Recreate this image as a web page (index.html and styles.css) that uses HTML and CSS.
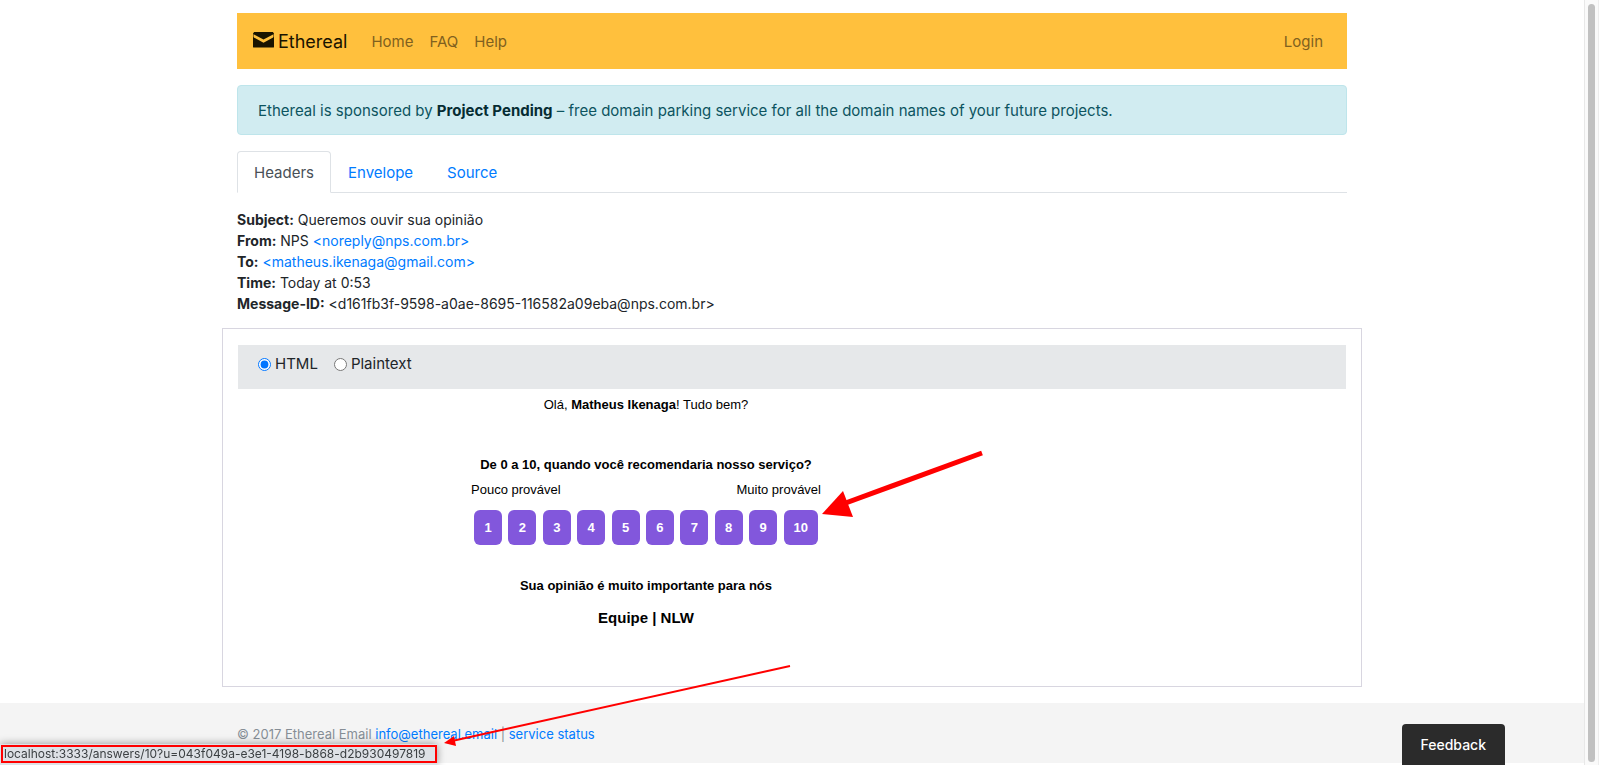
FILE: index.html
```html
<!DOCTYPE html>
<html lang="en">
<head>
<meta charset="utf-8">
<title>Ethereal Email</title>
<link rel="stylesheet" href="styles.css">
</head>
<body>
<div class="container">
  <nav class="navbar">
    <a class="brand" href="#">
      <svg class="brand-icon" width="21" height="16" viewBox="0 0 21 16" aria-hidden="true">
        <path fill="#1a1400" d="M0 5 10.500 10.700 21 5V15H0z"/>
        <path fill="#1a1400" d="M1 0H20L21 2 10.500 7.500 0 2z"/>
        <path fill="none" stroke="#1a1400" stroke-opacity=".5" stroke-width="1" d="M.5 1V15.500H20.500V1"/>
      </svg>
      Ethereal</a>
    <a class="nav-link" href="#">Home</a>
    <a class="nav-link" href="#">FAQ</a>
    <a class="nav-link" href="#">Help</a>
    <a class="nav-link login" href="#">Login</a>
  </nav>

  <div class="alert">Ethereal is sponsored by <a class="alert-link" href="#">Project Pending</a> – free domain parking service for all the domain names of your future projects.</div>

  <div class="tabs">
    <a class="tab active" href="#">Headers</a>
    <a class="tab" href="#">Envelope</a>
    <a class="tab" href="#">Source</a>
  </div>

  <div class="headers">
    <div><strong>Subject:</strong> Queremos ouvir sua opinião</div>
    <div><strong>From:</strong> NPS <a href="#">&lt;noreply@nps.com.br&gt;</a></div>
    <div><strong>To:</strong> <a href="#">&lt;matheus.ikenaga@gmail.com&gt;</a></div>
    <div><strong>Time:</strong> Today at 0:53</div>
    <div><strong>Message-ID:</strong> &lt;d161fb3f-9598-a0ae-8695-116582a09eba@nps.com.br&gt;</div>
  </div>

  <main class="message">
    <div class="format">
      <label class="choice"><input type="radio" name="format" checked>HTML</label>
      <label class="choice"><input type="radio" name="format">Plaintext</label>
    </div>
    <div class="mail">
      <p class="greeting">Olá, <strong>Matheus Ikenaga</strong>! Tudo bem?</p>
      <p class="question">De 0 a 10, quando você recomendaria nosso serviço?</p>
      <div class="survey">
        <div class="scale"><span>Pouco provável</span><span>Muito provável</span></div>
        <div class="scores">
          <a class="score" href="#">1</a>
          <a class="score" href="#">2</a>
          <a class="score" href="#">3</a>
          <a class="score" href="#">4</a>
          <a class="score" href="#">5</a>
          <a class="score" href="#">6</a>
          <a class="score" href="#">7</a>
          <a class="score" href="#">8</a>
          <a class="score" href="#">9</a>
          <a class="score" href="#">10</a>
        </div>
      </div>
      <p class="thanks">Sua opinião é muito importante para nós</p>
      <h3 class="team">Equipe | NLW</h3>
    </div>
  </main>
</div>

<footer class="footer">
  <div class="footer-inner">© 2017 Ethereal Email <a href="#">info@ethereal.email</a> | <a href="#">service status</a></div>
</footer>

<button class="feedback" type="button">Feedback</button>
<div class="status"><div class="status-text">localhost:3333/answers/10?u=043f049a-e3e1-4198-b868-d2b930497819</div></div>
<div class="scrollbar"><div class="thumb"></div></div>

<svg class="arrows" width="1000" height="765" viewBox="0 0 1000 765" aria-hidden="true">
  <g fill="#f00" stroke="#f00">
    <path stroke-width="5" d="M982 453 832 508"/>
    <path stroke="none" d="M822 514 843 491 853 517z"/>
    <path stroke-width="2" d="M790 666 452 741"/>
    <path stroke="none" d="M444 743 454 736 456 746z"/>
  </g>
</svg>
</body>
</html>
```
FILE: styles.css
```css
* { box-sizing: border-box; }

body {
  margin: 0;
  padding-right: 15px;
  background: #fff;
  color: #212529;
  font: 15px/24px Inter, "Liberation Sans", sans-serif;
  overflow: hidden;
}

a { color: #007bff; text-decoration: none; }
p { margin: 0; }

.container, .footer-inner {
  max-width: 1140px;
  margin: 0 auto;
  padding: 0 15px;
}
.container { padding-top: 13px; }

.navbar {
  display: flex;
  align-items: center;
  min-height: 56px;
  margin-bottom: 16px;
  padding: 0 16px;
  background: #ffc03d;
}
.brand {
  display: flex;
  align-items: center;
  gap: 4px;
  margin-right: 16px;
  padding-top: 2px;
  color: #1a1400;
  font-size: 18px;
}
.brand-icon { margin-bottom: 4px; }
.nav-link { padding: 9px 8px 7px; color: #80601f; }
.login { margin-left: auto; }

.alert {
  margin-bottom: 16px;
  padding: 13px 20px 11px;
  border: 1px solid #bee5eb;
  border-radius: 4px;
  background: #d1ecf1;
  color: #0c5460;
}
.alert-link { color: #062c33; font-weight: 700; }

.tabs {
  display: flex;
  border-bottom: 1px solid #dee2e6;
  margin-bottom: 16px;
}
.tab {
  padding: 9px 16px 7px;
  border: 1px solid transparent;
  border-radius: 4px 4px 0 0;
  margin-bottom: -1px;
}
.tab.active {
  border-color: #dee2e6 #dee2e6 #fff;
  background: #fff;
  color: #495057;
}

.headers {
  margin-bottom: 14px;
  font-size: 14px;
  line-height: 21px;
}

.message {
  min-height: 359px;
  margin: 0 -15px 16px;
  padding: 16px 15px;
  border: 1px solid #d8d6e0;
}
.format {
  display: flex;
  align-items: flex-start;
  gap: 16px;
  height: 44px;
  padding: 7px 20px;
  background: #e6e8ea;
}
.choice { display: flex; align-items: center; gap: 4px; }
.choice input { width: 13px; height: 13px; margin: 0; }

.mail {
  max-width: 816px;
  padding: 8px;
  color: #000;
  font: 13px/16px "Liberation Sans", Arial, sans-serif;
  text-align: center;
}
.greeting { margin-bottom: 44px; }
.question { margin-bottom: 9px; font-weight: 700; }
.survey { width: 350px; margin: 0 auto; }
.scale { display: flex; justify-content: space-between; margin-bottom: 12px; }
.scores { display: flex; justify-content: space-between; padding: 0 3px; }
.score {
  min-width: 28px;
  padding: 10px;
  border-radius: 6px;
  background: #8257dc;
  color: #fff;
  font-weight: 700;
  line-height: 15px;
}
.thanks { margin: 33px 0 15px; font-weight: 700; }
.team { margin: 0; font-size: 15px; line-height: 18px; }

.footer {
  padding: 21px 0 18px;
  background: #f4f4f4;
  color: #868e96;
  font-size: 13px;
  line-height: 21px;
}

.feedback {
  position: fixed;
  right: 94px;
  bottom: 0;
  padding: 11px 19px 10px;
  border: 0;
  border-radius: 4px 4px 0 0;
  background: #2b2b2b;
  color: #fff;
  font: 500 14px/20px Inter, sans-serif;
}

.status {
  position: fixed;
  left: 0;
  bottom: 0;
  padding: 1px 0 2px 1px;
  background: #dee1e6;
  box-shadow: 0 0 8px rgba(0, 0, 0, .4);
}
.status-text {
  padding: 0 9px 0 1px;
  border: 2px solid #f00;
  color: #3c4043;
  font-size: 12px;
  line-height: 14px;
}

.scrollbar {
  position: fixed;
  top: 0;
  right: 0;
  bottom: 0;
  display: flex;
  width: 15px;
  padding: 4px 3px 3px;
  border-left: 1px solid #e8e8e8;
  border-right: 1px solid #ededed;
  background: #fafafa;
}
.thumb { flex: 1; border-radius: 4px; background: #c1c1c1; }

.arrows { position: absolute; top: 0; left: 0; pointer-events: none; }
```
